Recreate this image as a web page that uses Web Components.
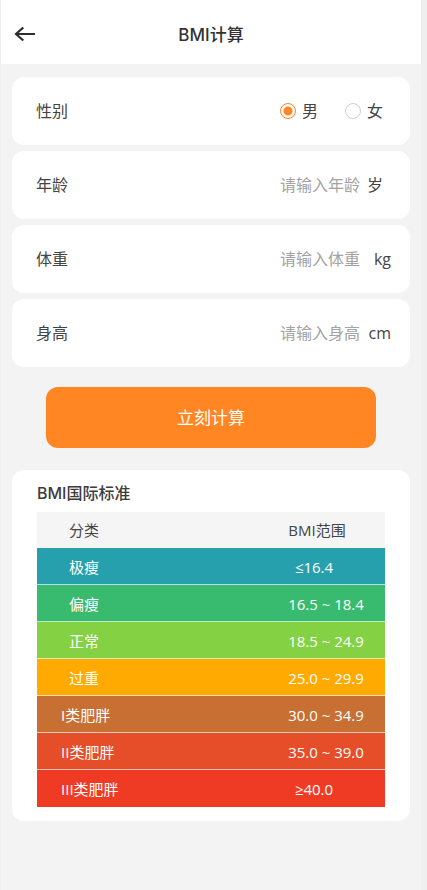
<!DOCTYPE html>
<html lang="zh-CN">
<head>
<meta charset="utf-8">
<meta name="viewport" content="width=device-width, initial-scale=1">
<title>BMI计算</title>
<style>
  html, body { margin: 0; min-height: 100%; background: #efefef; }
  body {
    font-family: "Open Sans", "Noto Sans CJK SC", sans-serif;
    font-size: 16px;
    line-height: 24px;
    color: #444;
    --accent: #ff8622;
    --card: #fff;
    --page: #f3f3f3;
    --heading-font: Inter, "Noto Sans CJK SC", sans-serif;
  }
</style>
</head>
<body>
<bmi-page></bmi-page>

<template id="t-bmi-page">
  <style>
    :host { display: block; box-sizing: border-box; min-height: 100vh; margin: 0 6px 0 1px; background: var(--page); }
    main { padding: 13px 11px 24px; }
    form { display: grid; gap: 6px; margin: 0; }
    submit-button { margin: 14px 34px 0; }
    standard-table { margin-top: 22px; }
  </style>
  <app-header>BMI计算</app-header>
  <main>
    <form>
      <gender-field></gender-field>
      <number-field label="年龄" hint="请输入年龄" unit="岁"></number-field>
      <number-field label="体重" hint="请输入体重" unit="kg"></number-field>
      <number-field label="身高" hint="请输入身高" unit="cm"></number-field>
      <submit-button>立刻计算</submit-button>
    </form>
    <standard-table></standard-table>
  </main>
</template>

<template id="t-app-header">
  <style>
    :host { display: grid; grid-template-columns: 48px 1fr 48px; align-items: center; height: 64px; padding-top: 6px; box-sizing: border-box; background: var(--card); color: #333; }
    button { display: grid; place-items: center; width: 48px; height: 44px; padding: 0; border: 0; background: none; color: #2b2f31; }
    h1 { margin: 0; font-family: var(--heading-font); font-size: 17px; line-height: 24px; font-weight: 450; text-align: center; }
  </style>
  <button type="button" aria-label="返回">
    <svg width="22" height="16" viewBox="0 0 22 16" fill="none" stroke="currentColor" stroke-width="2.2"><path d="M21 7H2M9.3 .5 2 7l7.3 6.5"/></svg>
  </button>
  <h1><slot></slot></h1>
</template>

<template id="t-field-card">
  <style>
    :host { display: flex; align-items: center; justify-content: space-between; box-sizing: border-box; height: 68px; padding: 0 19px 0 24px; border-radius: 12px; background: var(--card); }
  </style>
  <slot></slot>
</template>

<template id="t-gender-field">
  <style>
    :host { display: block; }
    .options { display: flex; gap: 27px; padding-right: 8px; }
    label { display: flex; align-items: center; gap: 6px; }
    input { appearance: none; box-sizing: border-box; width: 16px; height: 16px; margin: 0; border: 1px solid #d0d0d0; border-radius: 50%; background: #fff; }
    input:checked { border-color: var(--accent); background: radial-gradient(circle, var(--accent) 4px, #fff 5px); }
  </style>
  <field-card>
    <span id="name">性别</span>
    <div class="options" role="radiogroup" aria-labelledby="name">
      <label><input type="radio" name="gender" value="m" checked>男</label>
      <label><input type="radio" name="gender" value="f">女</label>
    </div>
  </field-card>
</template>

<template id="t-number-field">
  <style>
    :host { display: block; }
    .entry { display: flex; flex: 1; align-items: center; gap: 7px; }
    input { flex: 1; min-width: 0; padding: 0; border: 0; outline: 0; background: none; font: inherit; color: inherit; text-align: right; }
    input::placeholder { color: #a3a3a3; opacity: 1; }
    .unit { width: 24px; text-align: right; }
    .unit:lang(zh) { text-align: left; }
  </style>
  <field-card>
    <label for="value"></label>
    <div class="entry"><input id="value" inputmode="decimal"><span class="unit"></span></div>
  </field-card>
</template>

<template id="t-submit-button">
  <style>
    :host { display: block; }
    button { display: block; width: 100%; height: 61px; padding: 0; border: 0; border-radius: 12px; background: var(--accent); color: #fff; font: inherit; font-size: 17px; }
  </style>
  <button type="button"><slot></slot></button>
</template>

<template id="t-standard-table">
  <style>
    :host { display: block; padding: 11px 25px 14px; border-radius: 12px; background: var(--card); }
    h2 { margin: 0 0 7px; font-family: var(--heading-font); font-size: 16px; line-height: 24px; font-weight: 450; color: #3c3c3c; }
    table { width: 100%; border-collapse: collapse; table-layout: fixed; font-size: 15px; line-height: 24px; }
    th, td { box-sizing: border-box; height: 37px; padding: 0; font-weight: 400; }
    thead th { height: 36px; background: #f5f5f5; }
    tbody { color: #fff; }
    tbody tr { background: linear-gradient(rgba(255,255,255,.65), rgba(255,255,255,.65)) bottom / 100% 1px no-repeat var(--row); }
    tbody tr:last-child { background: var(--row); }
    th { padding-left: 32px; text-align: left; }
    th.wide { padding-left: 24px; }
    td, th.range { padding: 0; text-align: center; }
    th.range { padding-right: 18px; }
    td.single { padding-right: 24px; }
    col:last-child { width: 118px; }
  </style>
  <h2>BMI国际标准</h2>
  <table>
    <colgroup><col><col></colgroup>
    <thead><tr><th scope="col">分类</th><th scope="col" class="range">BMI范围</th></tr></thead>
    <tbody></tbody>
  </table>
</template>

<script>
  class TemplateElement extends HTMLElement {
    constructor() {
      super();
      const source = document.getElementById('t-' + this.localName);
      this.attachShadow({ mode: 'open' }).append(source.content.cloneNode(true));
    }
  }

  customElements.define('app-header', class extends TemplateElement {});
  customElements.define('field-card', class extends TemplateElement {});
  customElements.define('gender-field', class extends TemplateElement {});
  customElements.define('submit-button', class extends TemplateElement {});

  customElements.define('number-field', class extends TemplateElement {
    connectedCallback() {
      const root = this.shadowRoot;
      const unit = this.getAttribute('unit');
      root.querySelector('label').textContent = this.getAttribute('label');
      root.querySelector('input').placeholder = this.getAttribute('hint');
      const unitBox = root.querySelector('.unit');
      unitBox.textContent = unit;
      unitBox.lang = /^[a-z]+$/.test(unit) ? 'en' : 'zh-CN';
    }
  });

  const LEVELS = [
    ['极瘦', '≤16.4', '#27a0ae'],
    ['偏瘦', '16.5 ~ 18.4', '#38bb6e'],
    ['正常', '18.5 ~ 24.9', '#84d243'],
    ['过重', '25.0 ~ 29.9', '#ffaa00'],
    ['I类肥胖', '30.0 ~ 34.9', '#c87033'],
    ['II类肥胖', '35.0 ~ 39.0', '#e54e28'],
    ['III类肥胖', '≥40.0', '#f03b24'],
  ];

  customElements.define('standard-table', class extends TemplateElement {
    connectedCallback() {
      const body = this.shadowRoot.querySelector('tbody');
      body.replaceChildren(...LEVELS.map(([name, range, color]) => {
        const row = document.createElement('tr');
        row.style.setProperty('--row', color);
        const head = document.createElement('th');
        head.scope = 'row';
        head.textContent = name;
        head.classList.toggle('wide', name.length > 2);
        const cell = document.createElement('td');
        cell.textContent = range;
        cell.classList.toggle('single', !range.includes('~'));
        row.append(head, cell);
        return row;
      }));
    }
  });

  customElements.define('bmi-page', class extends TemplateElement {});
</script>
</body>
</html>
